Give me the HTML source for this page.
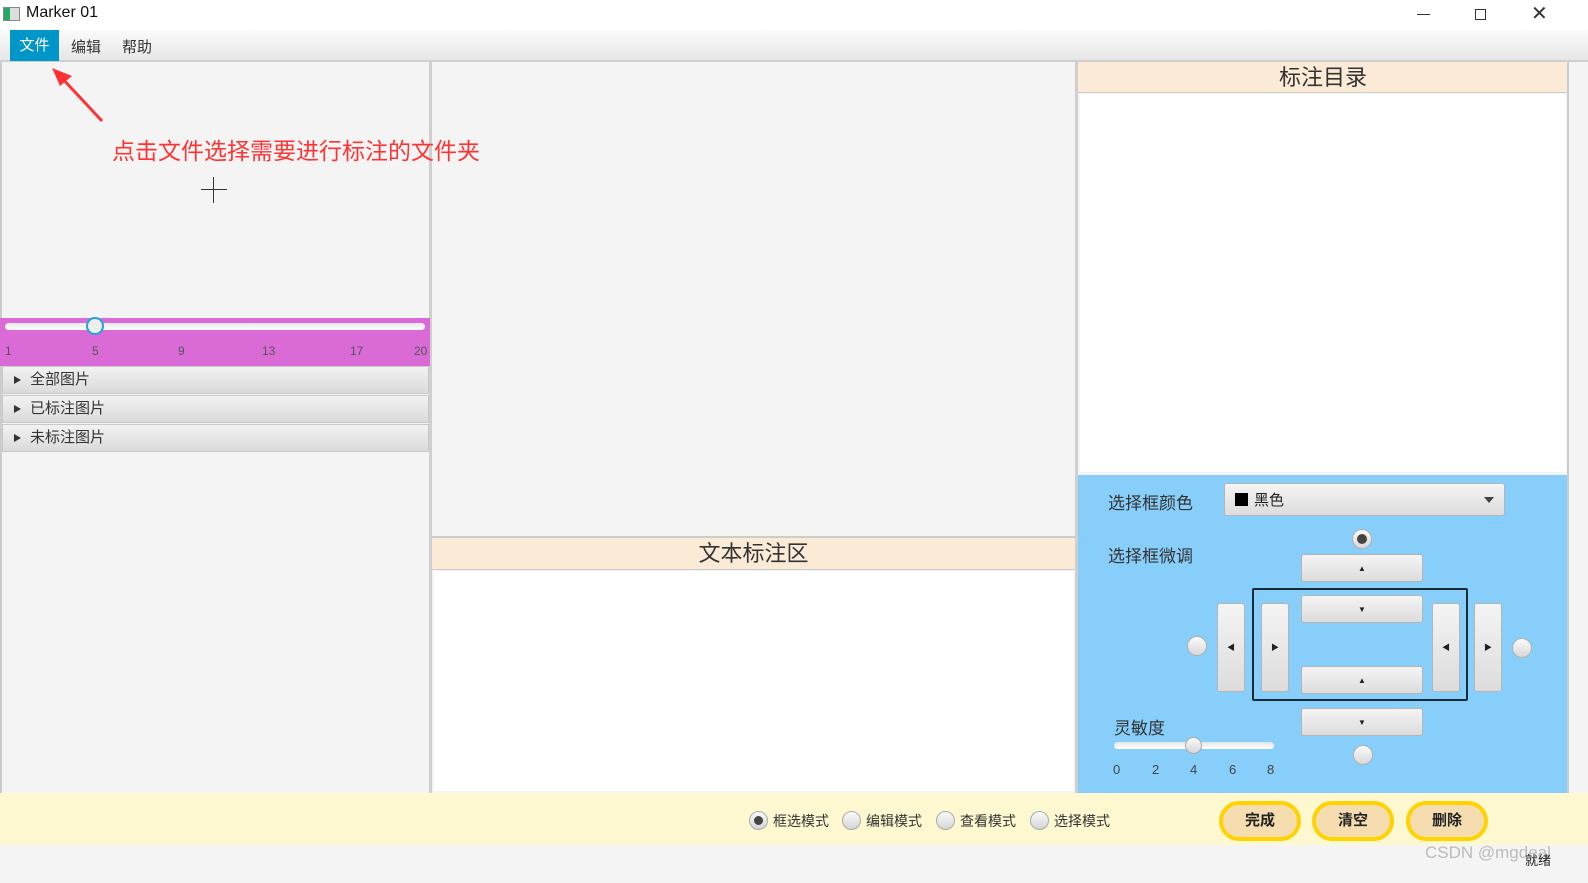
<!DOCTYPE html>
<html><head><meta charset="utf-8"><style>
*{margin:0;padding:0;box-sizing:border-box}
body{width:1588px;height:883px;position:relative;overflow:hidden;background:#f4f4f4;font-family:"Liberation Sans","Noto Sans CJK SC",sans-serif;color:#333}
.a{position:absolute}
.btn{position:absolute;background:linear-gradient(#f4f4f4,#dcdcdc);border:1px solid #b5b5b5;border-radius:3px;display:flex;align-items:center;justify-content:center;font-size:8px;color:#222}
.rad{position:absolute;width:20px;height:20px;border-radius:50%;background:linear-gradient(#fafafa,#d8d8d8);border:1px solid #b0b0b0}
.tree{position:absolute;left:2px;width:427px;height:28px;background:linear-gradient(#f2f2f2,#dadada);border:1px solid #c8c8c8;font-size:15px;line-height:26px;padding-left:27px}
.tree:before{content:"";position:absolute;left:11px;top:9px;border-left:7px solid #333;border-top:4px solid transparent;border-bottom:4px solid transparent}
.mode{position:absolute;top:810px;font-size:14px;line-height:22px;padding-left:24px}
.mode i{position:absolute;left:0;top:1px;width:19px;height:19px;border-radius:50%;background:linear-gradient(#fafafa,#d5d5d5);border:1px solid #aaa}
.yb{position:absolute;top:801px;width:82px;height:40px;border:4px solid #ffd200;border-radius:20px;background:#f6ddb0;font-size:15px;font-weight:bold;text-align:center;line-height:32px;color:#222}
</style></head><body>
<div class="a" style="left:0;top:0;width:1588px;height:30px;background:#fff"></div>
<div class="a" style="left:3px;top:7px;width:17px;height:14px;border:1px solid #888;background:linear-gradient(90deg,#2a6 0,#2a6 40%,#ddd 40%)"></div>
<div class="a" style="left:26px;top:4px;font-size:16px;color:#111">Marker 01</div>
<div class="a" style="left:1417px;top:14px;width:13px;height:1px;background:#333"></div>
<div class="a" style="left:1475px;top:9px;width:11px;height:11px;border:1px solid #333"></div>
<div class="a" style="left:1531px;top:1px;font-size:20px;color:#333">✕</div>
<div class="a" style="left:0;top:30px;width:1588px;height:32px;background:linear-gradient(#fbfbfb,#e6e6e6);border-bottom:2px solid #cfcfcf"></div>
<div class="a" style="left:10px;top:30px;width:49px;height:31px;background:#0096c9;color:#fff;font-size:15px;line-height:31px;text-align:center">文件</div>
<div class="a" style="left:71px;top:36px;font-size:15px">编辑</div>
<div class="a" style="left:122px;top:36px;font-size:15px">帮助</div>
<!-- left -->
<div class="a" style="left:0;top:62px;width:2px;height:731px;background:#ccc"></div>
<div class="a" style="left:429px;top:62px;width:3px;height:731px;background:#cfcfcf"></div>
<svg class="a" style="left:50px;top:66px" width="56" height="58"><line x1="52" y1="55" x2="10" y2="10" stroke="#f33" stroke-width="3"/><polygon points="2,2 22,10 10,20" fill="#f33"/></svg>
<div class="a" style="left:112px;top:132px;font-size:23px;color:#f33">点击文件选择需要进行标注的文件夹</div>
<div class="a" style="left:201px;top:189px;width:26px;height:1px;background:#333"></div>
<div class="a" style="left:213px;top:177px;width:1px;height:26px;background:#333"></div>
<div class="a" style="left:0;top:318px;width:430px;height:48px;background:#da6ad6"></div>
<div class="a" style="left:5px;top:323px;width:420px;height:7px;border-radius:4px;background:linear-gradient(#e8e8e8,#fff)"></div>
<div class="a" style="left:86px;top:317px;width:18px;height:18px;border-radius:50%;background:#eee;border:2px solid #1fa6d8"></div>
<div class="a" style="left:5px;top:344px;width:420px;font-size:12px;color:#555">
<span class="a" style="left:0">1</span><span class="a" style="left:87px">5</span><span class="a" style="left:173px">9</span><span class="a" style="left:257px">13</span><span class="a" style="left:345px">17</span><span class="a" style="left:409px">20</span></div>
<div class="tree" style="top:366px">全部图片</div>
<div class="tree" style="top:395px">已标注图片</div>
<div class="tree" style="top:424px">未标注图片</div>
<!-- center -->
<div class="a" style="left:1075px;top:62px;width:3px;height:731px;background:#cfcfcf"></div>
<div class="a" style="left:432px;top:536px;width:643px;height:2px;background:#ccc"></div>
<div class="a" style="left:432px;top:538px;width:643px;height:32px;background:#fbead6;border-bottom:1px solid #ccc;text-align:center;font-size:22px;line-height:32px">文本标注区</div>
<div class="a" style="left:434px;top:571px;width:640px;height:220px;background:#fff"></div>
<!-- right -->
<div class="a" style="left:1078px;top:62px;width:490px;height:31px;background:#fbead6;border-bottom:1px solid #ccc;text-align:center;font-size:22px;line-height:31px">标注目录</div>
<div class="a" style="left:1080px;top:94px;width:486px;height:378px;background:#fff"></div>
<div class="a" style="left:1567px;top:62px;width:2px;height:731px;background:#ccc"></div>
<div class="a" style="left:1078px;top:475px;width:489px;height:318px;background:#87cefa"></div>
<div class="a" style="left:1108px;top:489px;font-size:17px">选择框颜色</div>
<div class="a" style="left:1108px;top:542px;font-size:17px">选择框微调</div>
<div class="btn" style="left:1224px;top:483px;width:281px;height:33px;justify-content:flex-start;padding-left:10px;font-size:15px"><span style="display:inline-block;width:13px;height:13px;background:#000;margin-right:6px"></span>黑色<span style="position:absolute;right:10px;top:13px;border-top:6px solid #444;border-left:5px solid transparent;border-right:5px solid transparent"></span></div>
<div class="rad" style="left:1352px;top:529px"><div style="width:10px;height:10px;border-radius:50%;background:#444;margin:4px"></div></div>
<div class="btn" style="left:1301px;top:554px;width:122px;height:28px">▲</div>
<div class="a" style="left:1252px;top:588px;width:216px;height:113px;border:2px solid #1a2a36;border-radius:2px"></div>
<div class="btn" style="left:1301px;top:595px;width:122px;height:28px">▼</div>
<div class="btn" style="left:1301px;top:666px;width:122px;height:28px">▲</div>
<div class="btn" style="left:1301px;top:708px;width:122px;height:28px">▼</div>
<div class="btn" style="left:1217px;top:603px;width:28px;height:89px">◀</div>
<div class="btn" style="left:1261px;top:603px;width:28px;height:89px">▶</div>
<div class="btn" style="left:1432px;top:603px;width:28px;height:89px">◀</div>
<div class="btn" style="left:1474px;top:603px;width:28px;height:89px">▶</div>
<div class="rad" style="left:1187px;top:636px"></div>
<div class="rad" style="left:1512px;top:638px"></div>
<div class="rad" style="left:1353px;top:745px"></div>
<div class="a" style="left:1114px;top:714px;font-size:17px">灵敏度</div>
<div class="a" style="left:1114px;top:742px;width:160px;height:7px;border-radius:4px;background:linear-gradient(#e6e6e6,#fff)"></div>
<div class="a" style="left:1185px;top:737px;width:17px;height:17px;border-radius:50%;background:linear-gradient(#fafafa,#d5d5d5);border:1px solid #aaa"></div>
<div class="a" style="left:1113px;top:762px;font-size:13px;color:#444;width:170px">
<span class="a" style="left:0">0</span><span class="a" style="left:39px">2</span><span class="a" style="left:77px">4</span><span class="a" style="left:116px">6</span><span class="a" style="left:154px">8</span></div>
<!-- bottom -->
<div class="a" style="left:0;top:793px;width:1588px;height:52px;background:#fef8d0"></div>
<div class="mode" style="left:749px"><i><b style="display:block;width:9px;height:9px;border-radius:50%;background:#444;margin:4px"></b></i>框选模式</div>
<div class="mode" style="left:842px"><i></i>编辑模式</div>
<div class="mode" style="left:936px"><i></i>查看模式</div>
<div class="mode" style="left:1030px"><i></i>选择模式</div>
<div class="yb" style="left:1219px">完成</div>
<div class="yb" style="left:1312px">清空</div>
<div class="yb" style="left:1406px">删除</div>
<div class="a" style="left:1425px;top:843px;font-size:17px;color:#bbb">CSDN @mgdeal</div>
<div class="a" style="left:1525px;top:850px;font-size:13px;color:#222">就绪</div>
</body></html>
